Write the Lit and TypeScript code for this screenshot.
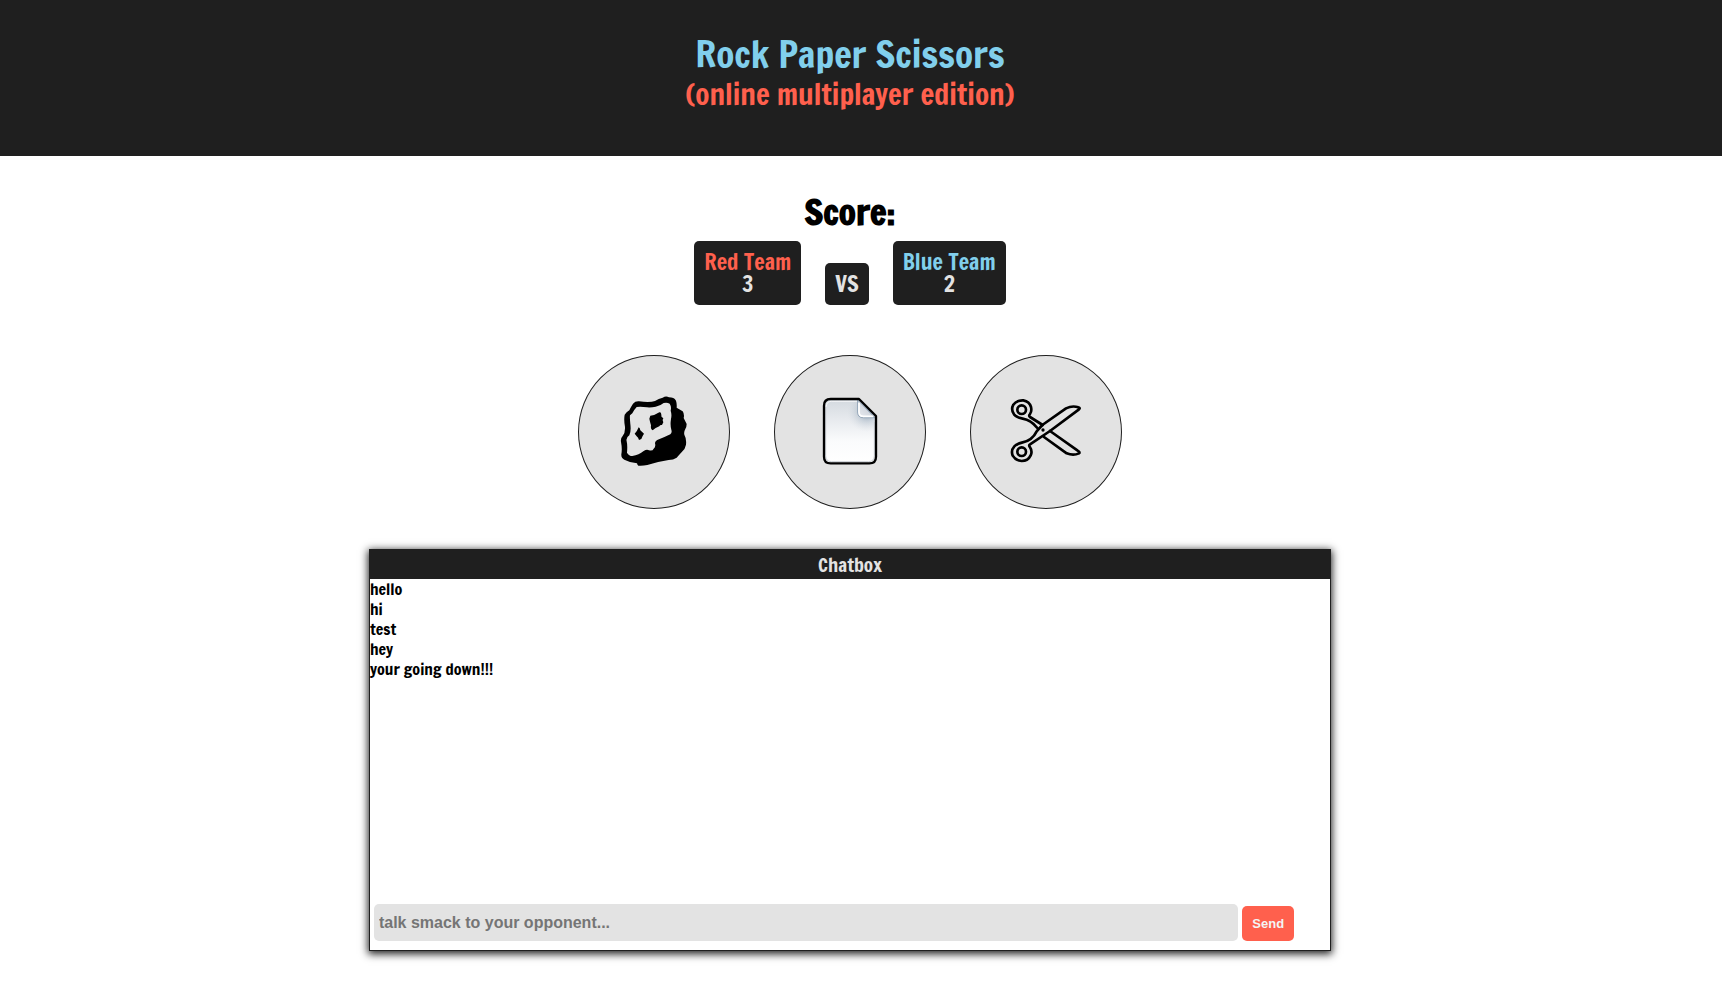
import { LitElement, html, css, svg } from "lit";
import { customElement, state } from "lit/decorators.js";

const rockIcon = html`<svg class="icon" viewBox="144 152 216 216" aria-hidden="true">
  ${svg`<path fill="#000" fill-rule="evenodd" d="M189 175 Q196 167 207 168 Q240 172 255 167 Q266 160 278 157 Q288 151 297 156 Q312 156 318 166 Q321 175 320 187 L338 198 Q344 207 341 218 L350 236 Q350 244 346 251 Q341 260 343 268 Q350 280 348 298 Q346 310 336 319 Q326 330 320 337 Q310 344 296 344 Q265 348 232 359 Q218 362 205 361 Q202 359 201 354 Q180 352 163 343 Q153 338 154 327 Q157 310 153 290 Q151 279 158 272 Q166 262 165 245 Q161 223 164 208 Q169 200 178 195 Q183 184 189 175 Z M200 185 Q190 196 187 204 L180 210 Q179 216 181 236 Q184 258 178 270 Q167 277 170 288 Q173 300 171 322 Q177 332 187 332 Q207 329 221 317 Q231 310 237 315 Q248 318 251 310 Q258 304 255 294 Q255 286 267 282 Q287 274 301 267 Q307 262 304 253 Q300 240 303 221 Q306 208 302 196 Q305 184 299 175 Q291 170 281 173 Q272 181 257 184 Q244 187 231 186 Q212 183 200 185 Z"/>
  <path fill="#000" d="M206 246 Q210 247 211 255 L222 265 Q217 272 214 281 L207 284 Q205 277 200 273 L194 265 Q202 257 206 246 Z"/>
  <path fill="#000" d="M241 211 Q255 210 268 201 Q274 200 274 208 Q272 214 280 219 Q275 225 280 231 L276 239 Q270 238 268 243 Q256 247 248 255 Q241 252 243 240 Q240 230 238 220 Z"/>`}
</svg>`;

const paperIcon = html`<svg class="icon" viewBox="147 152 216 216" aria-hidden="true">
  <defs>
    <linearGradient id="sheet" x1="0" y1="0" x2="0" y2="1">
      <stop offset="0" stop-color="#d3d9df" />
      <stop offset="0.3" stop-color="#e6e9ed" />
      <stop offset="0.65" stop-color="#fafbfc" />
      <stop offset="1" stop-color="#ffffff" />
    </linearGradient>
    <radialGradient id="shade" gradientUnits="userSpaceOnUse" cx="306" cy="200" r="60">
      <stop offset="0" stop-color="#7f95aa" stop-opacity="0.95" />
      <stop offset="0.5" stop-color="#a5b5c4" stop-opacity="0.4" />
      <stop offset="1" stop-color="#d3d9df" stop-opacity="0" />
    </radialGradient>
    <linearGradient id="fold" x1="0" y1="1" x2="1" y2="0">
      <stop offset="0" stop-color="#eceef2" />
      <stop offset="1" stop-color="#b9c0cb" />
    </linearGradient>
  </defs>
  <path fill="url(#sheet)" d="M197 161 H282 L333 212 V334 Q333 354 313 354 H197 Q177 354 177 334 V181 Q177 161 197 161 Z" />
  <path fill="url(#shade)" d="M197 161 H282 L333 212 V334 H177 V181 Q177 161 197 161 Z" />
  <path fill="none" stroke="#fff" stroke-opacity="0.75" stroke-width="3" d="M276 168 H200 Q184 168 184 184" />
  <path fill="none" stroke="#c9ced4" stroke-width="3" d="M182 185 V331 Q182 349 200 349 H310 Q328 349 328 331 V230" />
  <path fill="url(#fold)" stroke="#8fa2b5" stroke-width="3" d="M278 164 V200 Q278 217 295 217 H330 Z" />
  <path fill="none" stroke="#fff" stroke-width="5" d="M282 172 V199 Q282 213 296 213 H325" />
  <path fill="none" stroke="#000" stroke-width="7" stroke-linejoin="round" d="M197 161 H282 L333 212 V334 Q333 354 313 354 H197 Q177 354 177 334 V181 Q177 161 197 161 Z" />
</svg>`;

const scissorsIcon = html`<svg class="icon" viewBox="150 152 216 216" aria-hidden="true">
  <g fill="none" stroke="#000" stroke-width="8" stroke-linejoin="round" stroke-linecap="round">
    <circle cx="185" cy="193" r="13" />
    <circle cx="185" cy="319" r="13" />
    <path d="M248 239 L210 215 Q205 212 210 206 Q216 198 213 185 Q208 168 190 165 Q170 164 160 178 Q152 193 162 207 Q170 217 188 220 Q213 224 232 248" />
    <path d="M270 257 L352 315 Q362 321 357 324 Q340 332 320 324 L252 275" />
    <path d="M230 258 L247 239 L318 189 Q337 180 355 186 Q362 188 357 192 L270 257 L210 297 Q205 300 210 306 Q218 318 212 330 Q204 347 185 347 Q167 346 158 331 Q152 315 163 303 Q171 295 188 291 Q217 285 230 258 Z" />
  </g>
  <circle cx="249" cy="254" r="5" fill="#000" />
</svg>`;

@customElement("app-root")
export class AppRoot extends LitElement {
  static styles = css`
    :host {
      display: block;
      color: #000;
      font-family: "Francois One", "Open Sans Condensed", "Roboto Condensed", sans-serif;
      font-weight: 400;
    }
    * {
      box-sizing: border-box;
    }
    h1, h2, h3, p, ul {
      margin: 0;
      padding: 0;
      font-weight: 400;
    }
    .banner {
      background: #1f1f1f;
      padding: 34px 22px 42px 0;
      text-align: center;
    }
    .title {
      color: #81cfec;
      font-size: 37px;
      line-height: 40px;
    }
    .subtitle {
      color: #ff604d;
      font-size: 29px;
      line-height: 40px;
    }
    .page {
      display: flex;
      flex-direction: column;
      align-items: center;
      padding: 36px 22px 52px 0;
    }
    .score-title {
      font-size: 35px;
      font-weight: 700;
      line-height: 40px;
    }
    .scores {
      display: flex;
      align-items: flex-end;
      gap: 24px;
      margin-top: 9px;
    }
    .card {
      background: #1f1f1f;
      border-radius: 5px;
      color: #e3e3e3;
      font-size: 22px;
      line-height: 22px;
      padding: 10px;
      text-align: center;
    }
    .red {
      color: #ff604d;
    }
    .blue {
      color: #81cfec;
    }
    .choices {
      display: flex;
      gap: 44px;
      margin-top: 50px;
    }
    .choice {
      display: flex;
      align-items: center;
      justify-content: center;
      width: 152px;
      height: 154px;
      padding: 0;
      border: 1px solid #1f1f1f;
      border-radius: 50%;
      background: #e3e3e3;
      cursor: pointer;
    }
    .icon {
      width: 72px;
      height: 72px;
    }
    .chat {
      display: flex;
      flex-direction: column;
      width: 56.6%;
      min-height: 402px;
      margin-top: 40px;
      border: 1px solid #1f1f1f;
      background: #fff;
      box-shadow: 0 2px 8px 1px #1f1f1f;
    }
    .chat-title {
      background: #1f1f1f;
      color: #e3e3e3;
      font-size: 19px;
      line-height: 29px;
      text-align: center;
    }
    .messages {
      flex: 1;
      list-style: none;
      font-size: 16px;
      line-height: 20px;
    }
    .form {
      display: flex;
      align-items: flex-end;
      gap: 4px;
      padding: 0 36px 9px 4px;
    }
    .entry {
      flex: 1;
      min-width: 0;
      height: 37px;
      padding: 0 5px;
      border: 0;
      border-radius: 5px;
      background: #e3e3e3;
      font: 700 16px "Liberation Sans", sans-serif;
    }
    .entry::placeholder {
      color: #757575;
    }
    .send {
      height: 35px;
      padding: 0 10px;
      border: 0;
      border-radius: 5px;
      background: #ff604d;
      color: #f4f4f4;
      font: 700 13px "Liberation Sans", sans-serif;
    }
  `;

  @state() private messages = ["hello", "hi", "test", "hey", "your going down!!!"];

  private submit(event: Event) {
    event.preventDefault();
    const entry = this.renderRoot.querySelector<HTMLInputElement>(".entry")!;
    if (entry.value.trim()) {
      this.messages = [...this.messages, entry.value];
      entry.value = "";
    }
  }

  render() {
    return html`
      <header class="banner">
        <h1 class="title">Rock Paper Scissors</h1>
        <p class="subtitle">(online multiplayer edition)</p>
      </header>
      <main class="page">
        <h2 class="score-title">Score:</h2>
        <div class="scores">
          <div class="card"><p class="red">Red Team</p><p>3</p></div>
          <div class="card">VS</div>
          <div class="card"><p class="blue">Blue Team</p><p>2</p></div>
        </div>
        <div class="choices">
          <button class="choice" type="button" aria-label="Rock">${rockIcon}</button>
          <button class="choice" type="button" aria-label="Paper">${paperIcon}</button>
          <button class="choice" type="button" aria-label="Scissors">${scissorsIcon}</button>
        </div>
        <section class="chat">
          <h3 class="chat-title">Chatbox</h3>
          <ul class="messages">
            ${this.messages.map((message) => html`<li>${message}</li>`)}
          </ul>
          <form class="form" @submit=${this.submit}>
            <input class="entry" type="text" aria-label="Message" placeholder="talk smack to your opponent..." />
            <button class="send" type="submit">Send</button>
          </form>
        </section>
      </main>
    `;
  }
}
